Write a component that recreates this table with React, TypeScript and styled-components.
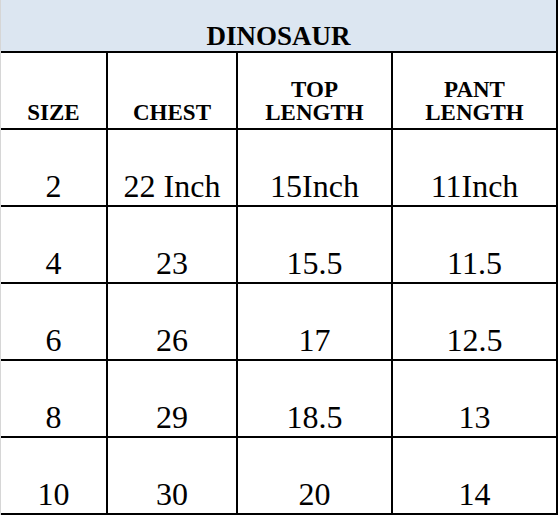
import React from 'react';
import styled, { createGlobalStyle } from 'styled-components';

const serif = `"Liberation Serif", "Times New Roman", Tinos, "DejaVu Serif", serif`;

const GlobalStyle = createGlobalStyle`
  html, body {
    margin: 0;
    padding: 0;
    background: #ffffff;
  }
  body {
    color: #000000;
  }
`;

const Sheet = styled.div`
  width: 559px;
  height: 515px;
  overflow: hidden;
  background: #ffffff;
  font-family: ${serif};
`;

const Table = styled.div`
  width: 558px;
  box-sizing: border-box;
  border-left: 1px solid #d6d6d6;
  display: grid;
  grid-template-columns: 107px 130px 155px 165px;
  grid-template-rows: 53px repeat(6, 77px);
`;

const TitleCell = styled.div`
  grid-column: 1 / -1;
  box-sizing: border-box;
  background: #dce6f1;
  border-bottom: 2px solid #000;
  border-right: 2px solid #000;
  padding-top: 23px;
  text-align: center;
  font-family: ${serif};
  font-size: 27px;
  line-height: 27px;
  font-weight: 700;
`;

const Cell = styled.div<{ $head?: boolean }>`
  box-sizing: border-box;
  border-right: 2px solid #000;
  border-bottom: 2px solid #000;
  display: flex;
  flex-direction: column;
  justify-content: flex-end;
  align-items: center;
  text-align: center;
  font-family: ${serif};
  font-weight: ${p => (p.$head ? 700 : 400)};
  font-size: ${p => (p.$head ? '23px' : '32px')};
  line-height: ${p => (p.$head ? '23px' : '36px')};
  padding-bottom: ${p => (p.$head ? '4px' : '1px')};
  white-space: nowrap;
`;

const headers = [['SIZE'], ['CHEST'], ['TOP', 'LENGTH'], ['PANT', 'LENGTH']];

const rows = [
  ['2', '22 Inch', '15Inch', '11Inch'],
  ['4', '23', '15.5', '11.5'],
  ['6', '26', '17', '12.5'],
  ['8', '29', '18.5', '13'],
  ['10', '30', '20', '14'],
];

const App: React.FC = () => {
  return (
    <>
      <GlobalStyle />
      <Sheet>
        <Table>
          <TitleCell>DINOSAUR</TitleCell>
          {headers.map((lines, i) => (
            <Cell $head key={'h' + i}>
              {lines.map(l => (
                <div key={l}>{l}</div>
              ))}
            </Cell>
          ))}
          {rows.map((row, r) =>
            row.map((v, c) => <Cell key={r + '-' + c}>{v}</Cell>)
          )}
        </Table>
      </Sheet>
    </>
  );
};

export default App;
